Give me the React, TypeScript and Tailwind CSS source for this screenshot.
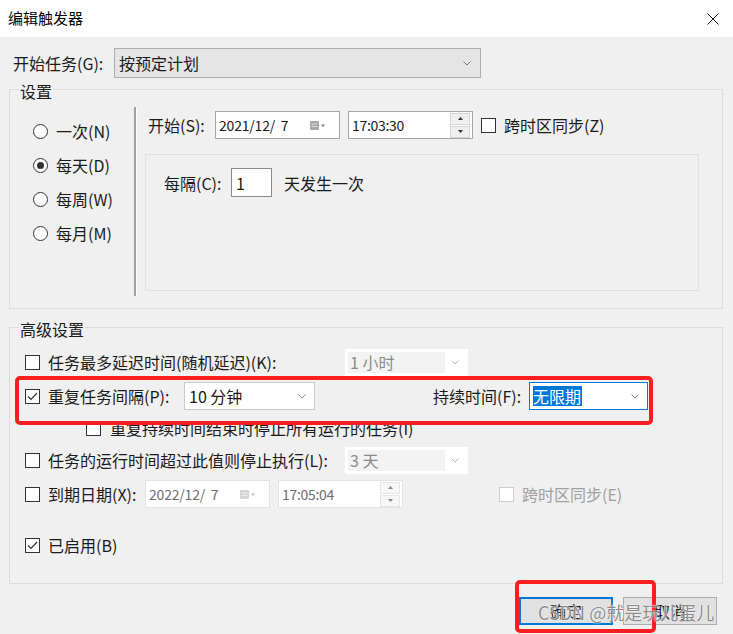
import React from "react";

const Chevron = ({ color = "#606060" }: { color?: string }) => (
  <svg width="8" height="5" viewBox="0 0 8 5" fill="none">
    <path d="M0.5 0.5 L4 4 L7.5 0.5" stroke={color} strokeWidth="1" />
  </svg>
);

const CalIcon = ({ light = false }: { light?: boolean }) => (
  <svg width="16" height="10" viewBox="0 0 16 10">
    <rect x="0" y="0" width="9" height="9" rx="1" fill={light ? "#d4d4d4" : "#a8a8a8"} />
    <rect x="1.5" y="2.5" width="6" height="1" fill={light ? "#efefef" : "#dcdcdc"} />
    <rect x="1.5" y="5" width="6" height="1" fill={light ? "#efefef" : "#dcdcdc"} />
    <path d="M11 3.5 L15 3.5 L13 6 Z" fill={light ? "#bdbdbd" : "#7a7a7a"} />
  </svg>
);

const Spin = ({ light = false }: { light?: boolean }) => (
  <div className="flex flex-col gap-[1px] mr-[2px]">
    <div className={`w-[20px] h-[12px] border ${light ? "border-[#e6e6e6] bg-[#f7f7f7]" : "border-[#d4d4d4] bg-[#f0f0f0]"} flex items-center justify-center`}>
      <svg width="5" height="3" viewBox="0 0 5 3"><path d="M0 3 L2.5 0 L5 3 Z" fill={light ? "#8a8a8a" : "#333"} /></svg>
    </div>
    <div className={`w-[20px] h-[12px] border ${light ? "border-[#e6e6e6] bg-[#f7f7f7]" : "border-[#d4d4d4] bg-[#f0f0f0]"} flex items-center justify-center`}>
      <svg width="5" height="3" viewBox="0 0 5 3"><path d="M0 0 L2.5 3 L5 0 Z" fill={light ? "#8a8a8a" : "#333"} /></svg>
    </div>
  </div>
);

const Check = ({ checked = false, disabled = false }: { checked?: boolean; disabled?: boolean }) => (
  <div
    className={`w-[15px] h-[15px] shrink-0 border bg-white flex items-center justify-center ${
      disabled ? "border-[#cccccc]" : "border-[#333333]"
    }`}
  >
    {checked && (
      <svg width="13" height="13" viewBox="0 0 13 13" fill="none">
        <path d="M2 6.5 L5 9.5 L11 3" stroke="#333" strokeWidth="1.2" />
      </svg>
    )}
  </div>
);

const Radio = ({ checked = false, label }: { checked?: boolean; label: string }) => (
  <div className="h-[34px] flex items-center">
    <div className="w-[15px] h-[15px] rounded-full border border-[#333] bg-white flex items-center justify-center shrink-0">
      {checked && <div className="w-[7px] h-[7px] rounded-full bg-[#333]" />}
    </div>
    <span className="ml-[8px]">{label}</span>
  </div>
);

const DisabledCombo = ({ text }: { text: string }) => (
  <div className="w-[123px] h-[27px] bg-white p-[3px] flex">
    <div className="flex-1 bg-[#f3f3f3] flex items-center pl-[2px] text-[#8a8a8a]">{text}</div>
    <div className="w-[20px] flex items-center justify-center">
      <Chevron color="#b5b5b5" />
    </div>
  </div>
);

export default function App() {
  return (
    <div className="relative w-[733px] h-[634px] overflow-hidden bg-[#f0f0f0] text-[16px] leading-[20px] text-[#1a1a1a] font-['Microsoft_YaHei','Noto_Sans_CJK_SC',sans-serif]">
      {/* Title bar */}
      <div className="h-[37px] bg-white flex items-center">
        <span className="ml-[8px] text-[15px] text-black -mt-[2px]">编辑触发器</span>
        <svg className="ml-auto mr-[14px]" width="12" height="12" viewBox="0 0 12 12">
          <path d="M0.5 0.5 L11.5 11.5 M11.5 0.5 L0.5 11.5" stroke="#111" strokeWidth="1" />
        </svg>
      </div>

      {/* Start task row */}
      <div className="mt-[11px] flex items-center h-[30px]">
        <span className="ml-[13px] w-[101px]">开始任务(G):</span>
        <div className="w-[367px] h-[30px] bg-[#e5e5e5] border border-[#adadad] flex items-center pl-[4px]">
          <span>按预定计划</span>
          <div className="ml-auto mr-[9px]">
            <Chevron color="#7a7a7a" />
          </div>
        </div>
      </div>

      {/* Settings group */}
      <div className="relative mt-[11px] ml-[9px] w-[714px] h-[220px] border border-[#dcdcdc]">
        <span className="absolute left-[9px] top-[-9px] px-[1px] bg-[#f0f0f0]">设置</span>
        <div className="flex h-full">
          <div className="w-[124px] pl-[23px] pt-[24px] flex flex-col">
            <Radio label="一次(N)" />
            <Radio label="每天(D)" checked />
            <Radio label="每周(W)" />
            <Radio label="每月(M)" />
          </div>
          <div className="mt-[17px] mb-[12px] w-[3px] bg-[#a0a0a0] border-r border-white" />
          <div className="flex-1 pt-[21px]">
            <div className="flex items-center h-[28px] pl-[11px]">
              <span className="w-[67px]">开始(S):</span>
              <div className="w-[125px] h-[28px] bg-white border border-[#a6a6a6] flex items-center pl-[3px] text-[14px] tracking-[-0.2px]">
                <span className="whitespace-pre">2021/12/  7</span>
                <div className="ml-auto mr-[13px] mt-[2px]">
                  <CalIcon />
                </div>
              </div>
              <div className="ml-[8px] w-[125px] h-[28px] bg-white border border-[#a6a6a6] flex items-center pl-[3px] text-[14px] tracking-[-0.3px]">
                <span>17:03:30</span>
                <div className="ml-auto">
                  <Spin />
                </div>
              </div>
              <div className="ml-[8px]">
                <Check />
              </div>
              <span className="ml-[8px]">跨时区同步(Z)</span>
            </div>
            <div className="ml-[8px] mt-[15px] w-[554px] h-[137px] border border-[#e0e0e0]">
              <div className="mt-[13px] pl-[18px] flex items-center h-[29px]">
                <span className="w-[67px]">每隔(C):</span>
                <div className="w-[41px] h-[29px] bg-white border border-[#8a8a8a] flex items-center pl-[4px]">1</div>
                <span className="ml-[12px]">天发生一次</span>
              </div>
            </div>
          </div>
        </div>
      </div>

      {/* Advanced group */}
      <div className="relative mt-[18px] ml-[9px] w-[714px] h-[257px] border border-[#dcdcdc]">
        <span className="absolute left-[9px] top-[-9px] px-[1px] bg-[#f0f0f0]">高级设置</span>
        <div className="pt-[20px] pl-[15px] flex flex-col">
          <div className="h-[28px] flex items-center">
            <Check />
            <span className="ml-[8px] w-[297px]">任务最多延迟时间(随机延迟)(K):</span>
            <DisabledCombo text="1 小时" />
          </div>
          <div className="mt-[6px] h-[28px] flex items-center">
            <Check checked />
            <span className="ml-[8px] w-[136px]">重复任务间隔(P):</span>
            <div className="w-[131px] h-[28px] bg-white border border-[#c8c8c8] flex items-center pl-[4px]">
              <span>10 分钟</span>
              <div className="ml-auto mr-[8px]">
                <Chevron color="#8a8a8a" />
              </div>
            </div>
            <span className="ml-[118px] w-[96px]">持续时间(F):</span>
            <div className="w-[119px] h-[28px] bg-white border border-[#0078d7] flex items-center pl-[3px]">
              <span className="bg-[#0078d7] text-white pr-[1px]">无限期</span>
              <div className="ml-auto mr-[8px]">
                <Chevron color="#8a8a8a" />
              </div>
            </div>
          </div>
          <div className="mt-[4px] h-[28px] flex items-center pl-[61px]">
            <Check />
            <span className="ml-[9px]">重复持续时间结束时停止所有运行的任务(I)</span>
          </div>
          <div className="mt-[4px] h-[28px] flex items-center">
            <Check />
            <span className="ml-[8px] w-[297px]">任务的运行时间超过此值则停止执行(L):</span>
            <DisabledCombo text="3 天" />
          </div>
          <div className="mt-[6px] h-[28px] flex items-center">
            <Check />
            <span className="ml-[8px] w-[97px]">到期日期(X):</span>
            <div className="w-[125px] h-[28px] bg-white border border-[#e3e3e3] flex items-center pl-[3px] text-[#6d6d6d] text-[14px] tracking-[-0.2px]">
              <span className="whitespace-pre">2022/12/  7</span>
              <div className="ml-auto mr-[13px] mt-[2px]">
                <CalIcon light />
              </div>
            </div>
            <div className="ml-[8px] w-[125px] h-[28px] bg-white border border-[#e3e3e3] flex items-center pl-[3px] text-[#6d6d6d] text-[14px] tracking-[-0.3px]">
              <span>17:05:04</span>
              <div className="ml-auto">
                <Spin light />
              </div>
            </div>
            <div className="ml-[96px]">
              <Check disabled />
            </div>
            <span className="ml-[8px] text-[#a0a0a0]">跨时区同步(E)</span>
          </div>
          <div className="mt-[23px] h-[28px] flex items-center">
            <Check checked />
            <span className="ml-[8px]">已启用(B)</span>
          </div>
        </div>
      </div>

      {/* Buttons */}
      <div className="mt-[13px] flex justify-end pr-[16px] gap-[10px]">
        <div className="w-[94px] h-[28px] bg-[#e1e1e1] border-2 border-[#0078d7] flex items-center justify-center">确定</div>
        <div className="w-[94px] h-[28px] bg-[#e1e1e1] border border-[#adadad] flex items-center justify-center">取消</div>
      </div>

      {/* Annotations */}
      <div className="absolute left-[15px] top-[376px] w-[638px] h-[49px] border-[4px] border-[#fa1e1e] rounded-[5px]" />
      <div className="absolute left-[515px] top-[580px] w-[141px] h-[53px] border-[4px] border-[#fa1e1e] rounded-[5px]" />
      <div className="absolute left-[538px] top-[600px] text-[18px] leading-[24px] text-[#8c8c8c] whitespace-nowrap [text-shadow:0_0_1px_#ffffff,0_0_2px_#ffffff]">
        CSDN @就是玩儿蛋儿
      </div>
    </div>
  );
}
